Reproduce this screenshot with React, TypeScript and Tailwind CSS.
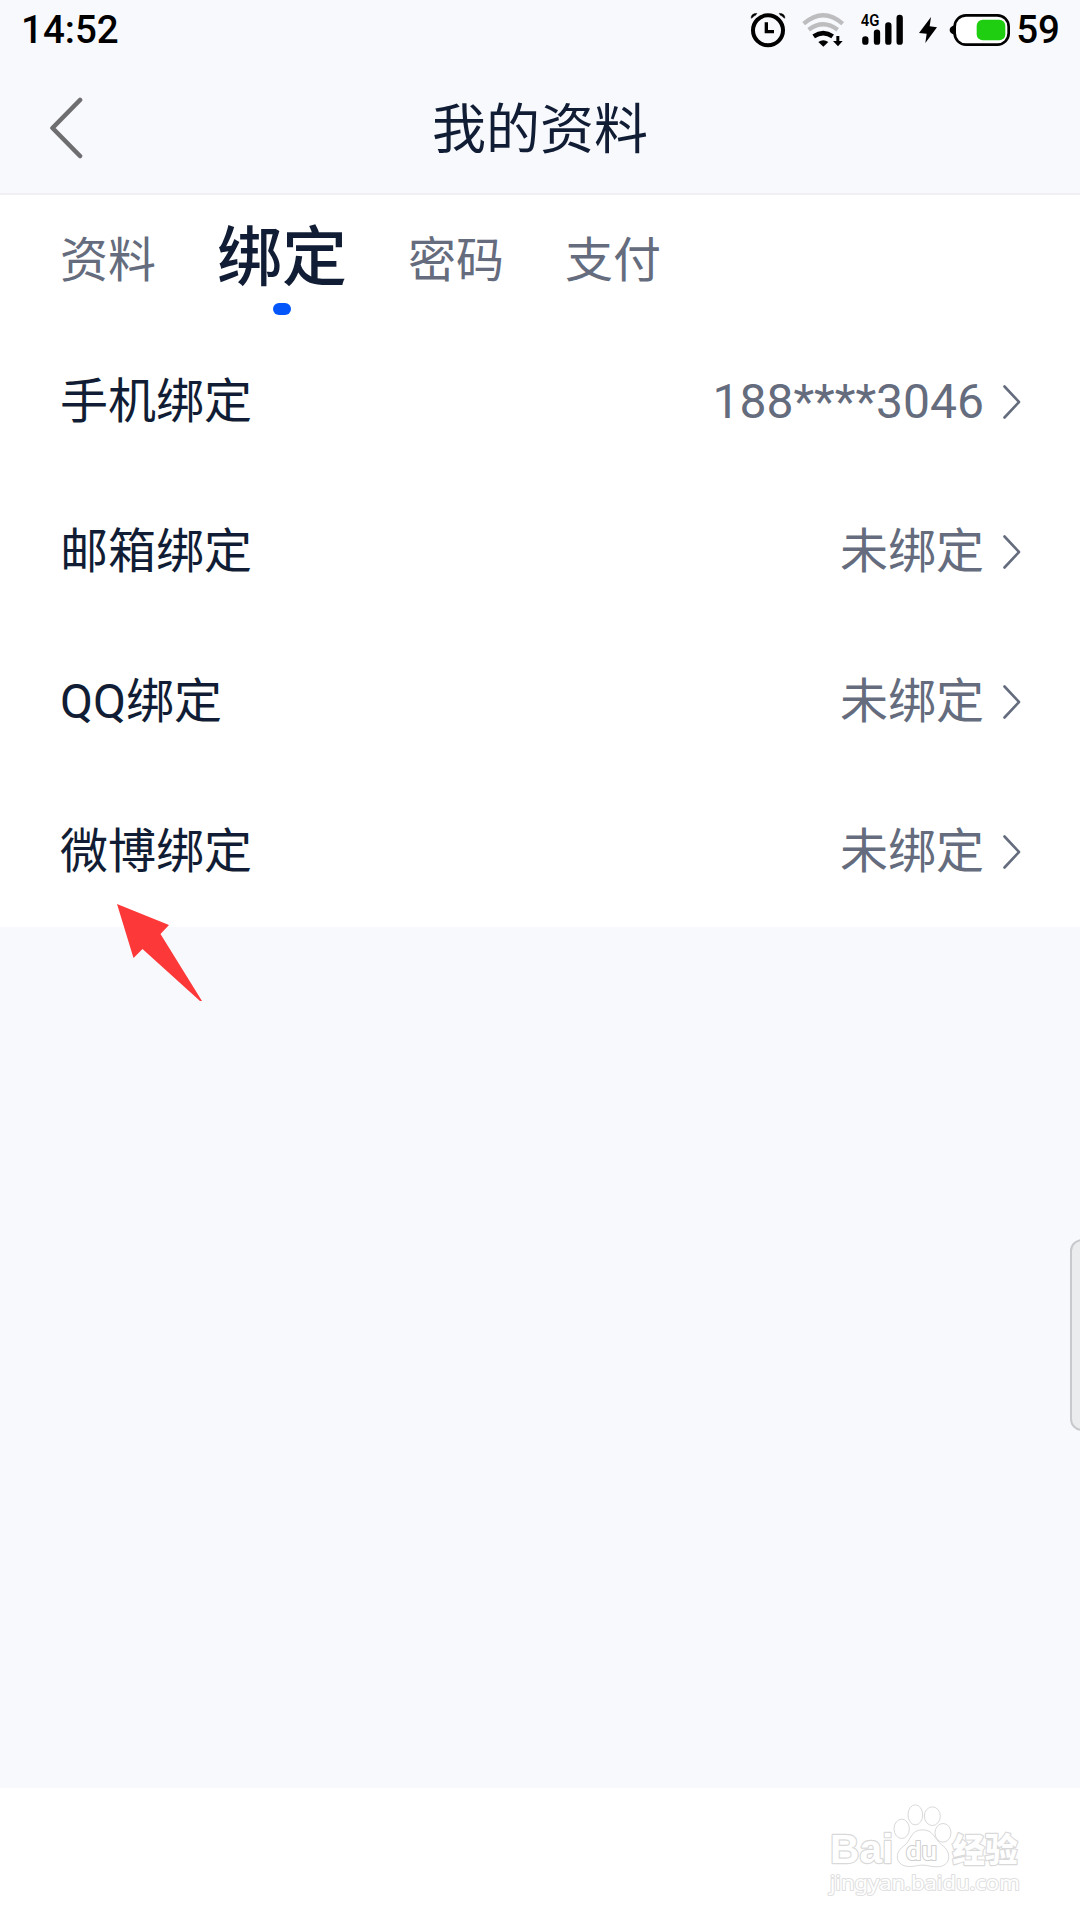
import React from 'react';

interface BindingItem {
  label: string;
  value: string;
}

const TABS = ['资料', '绑定', '密码', '支付'];
const ACTIVE_TAB = '绑定';

const BINDINGS: BindingItem[] = [
  { label: '手机绑定', value: '188****3046' },
  { label: '邮箱绑定', value: '未绑定' },
  { label: 'QQ绑定', value: '未绑定' },
  { label: '微博绑定', value: '未绑定' },
];

const AlarmIcon = () => (
  <svg viewBox="60 36 108 108" className="h-9 w-9" fill="none" stroke="#000">
    <circle cx="114" cy="91" r="45" strokeWidth="12" />
    <path d="M109 67v28h23" strokeWidth="10" />
    <path d="M63 55q0-15 18-15l-4 6q-6 1-8 6zM165 55q0-15-18-15l4 6q6 1 8 6z" fill="#000" strokeWidth="1" />
  </svg>
);

const WifiIcon = () => (
  <svg viewBox="216 36 126 108" className="h-9 w-[42px]" fill="none">
    <path d="M221 71Q280 20 338 71" stroke="#bdbdbf" strokeWidth="13" />
    <path d="M236 89Q280 56 323 89" stroke="#bdbdbf" strokeWidth="13" />
    <path d="M251 109Q280 90 308 109" stroke="#000" strokeWidth="14" />
    <path d="M265 126Q280 115 295 126L280 140Z" fill="#000" />
    <path d="M319 108h9v15h10L324 139L309 123h10z" fill="#000" />
  </svg>
);

const SignalIcon = () => (
  <svg viewBox="393 36 129 108" className="h-9 w-[43px]" fill="none" stroke="#000" strokeWidth="19" strokeLinecap="round">
    <text x="392" y="77" fontSize="49" fontWeight="600" textLength="56" lengthAdjust="spacingAndGlyphs" fill="#000" stroke="none" fontFamily="Roboto, sans-serif">
      4G
    </text>
    <path d="M406 118v7M441 98v27M475 76v49M509 54v71" />
  </svg>
);

const BoltIcon = () => (
  <svg viewBox="564 36 60 108" className="h-9 w-5">
    <path d="M603 51L567 99l23 2-4 28 35-47-22-3z" fill="#000" />
  </svg>
);

const BatteryIcon = () => (
  <svg viewBox="657 36 183 108" className="h-9 w-[61px]" fill="none">
    <rect x="674" y="46" width="162" height="88" rx="34" stroke="#000" strokeWidth="8" fill="#fff" />
    <path d="M672 76q-13 5-13 14t13 14z" fill="#000" />
    <rect x="740" y="59" width="86" height="62" rx="18" fill="#1fce10" />
  </svg>
);

const StatusBar = () => (
  <div className="flex h-[60px] items-center justify-between pr-5 pl-[21px] text-[38.5px] font-medium text-black">
    <span className="leading-[60px]">14:52</span>
    <div className="flex h-full items-center">
      <AlarmIcon />
      <div className="ml-4"><WifiIcon /></div>
      <div className="ml-[17px]"><SignalIcon /></div>
      <div className="ml-3.5"><BoltIcon /></div>
      <div className="ml-[11px]"><BatteryIcon /></div>
      <span className="ml-1.5 leading-[60px]">59</span>
    </div>
  </div>
);

const Header = () => (
  <header className="grid h-[135px] grid-cols-[1fr_auto_1fr] items-center border-b-2 border-[#f0f0f2] pl-[49px]">
    <svg viewBox="0 0 34 62" className="mt-0.5 h-[62px] w-[34px]" fill="none" stroke="#6e6e71" strokeWidth="4.6" strokeLinecap="round" strokeLinejoin="round">
      <path d="M31 3L3.5 31L31 59" />
    </svg>
    <h1 className="-ml-[49px] pt-[9px] text-[54px] leading-[80px]">我的资料</h1>
  </header>
);

const Tabs = () => (
  <nav className="flex h-[131px] items-start gap-[61px] pl-[60px]">
    {TABS.map((tab) =>
      tab === ACTIVE_TAB ? (
        <div key={tab} className="flex flex-col items-center pt-[19px]">
          <span className="text-[65px] leading-[88px] font-medium">{tab}</span>
          <span className="mt-px h-3 w-[18px] rounded-full bg-[#0456fb]" />
        </div>
      ) : (
        <span key={tab} className="pt-[30px] text-[48px] leading-[72px] text-[#646c7d]">
          {tab}
        </span>
      ),
    )}
  </nav>
);

const BindingRow: React.FC<{ item: BindingItem }> = ({ item }) => (
  <div className="flex h-[150px] items-center justify-between pt-0.5 pr-[59px] pl-[60px] text-[48px] leading-[72px]">
    <span>{item.label}</span>
    <div className="flex items-center gap-[19px] text-[#646c7d]">
      <span>{item.value}</span>
      <svg viewBox="0 0 18 34" className="h-[34px] w-[18px]" fill="none" stroke="currentColor" strokeWidth="2.6" strokeLinecap="round" strokeLinejoin="round">
        <path d="M1.5 1.5L16 17L1.5 32.5" />
      </svg>
    </div>
  </div>
);

const PointerArrow = () => (
  <svg viewBox="0 0 86 98" className="absolute top-[904px] left-[117px] h-[98px] w-[86px]">
    <path d="M0 0L52 21L43.500 30L85 97H83L25.500 45L16.500 54Z" fill="#fd3838" />
  </svg>
);

const Watermark = () => (
  <svg viewBox="0 0 600 290" className="h-[97px] w-[200px]" fill="#fff" stroke="#d9d9d9" strokeWidth="3" strokeLinejoin="round">
    <g paintOrder="stroke" strokeWidth="7">
      <text x="9" y="178" fontSize="122" fontWeight="700" textLength="190" lengthAdjust="spacingAndGlyphs" fontFamily="'Liberation Sans', sans-serif">Bai</text>
      <text x="376" y="173" fontSize="100" fontWeight="900" textLength="196" lengthAdjust="spacingAndGlyphs" fontFamily="'Noto Sans CJK SC', sans-serif">经验</text>
      <text x="8" y="257" fontSize="60" textLength="570" lengthAdjust="spacingAndGlyphs" strokeWidth="6" stroke="#e0e0e0" fontFamily="'Noto Sans', sans-serif">jingyan.baidu.com</text>
    </g>
    <ellipse cx="224" cy="74" rx="23" ry="29" />
    <ellipse cx="265" cy="32" rx="22" ry="30" />
    <ellipse cx="316" cy="36" rx="24" ry="28" />
    <ellipse cx="348" cy="86" rx="24" ry="28" />
    <path d="M286 77C250 77 254 108 230 126C200 146 205 187 248 187C267 187 270 183 287 183C304 183 310 188 330 188C372 188 376 143 344 122C320 102 320 77 286 77Z" />
    <text x="236" y="168" fontSize="80" fontWeight="500" textLength="94" lengthAdjust="spacingAndGlyphs" strokeWidth="6" paintOrder="stroke" stroke="#cfcfcf" fontFamily="Roboto, sans-serif">du</text>
  </svg>
);

export default function App() {
  return (
    <div className="relative flex h-[1920px] w-[1080px] flex-col overflow-hidden bg-[#f8f9fd] font-[Roboto,'Noto_Sans_CJK_SC',sans-serif] text-[#111d34]">
      <StatusBar />
      <Header />
      <main className="h-[732px] bg-white">
        <Tabs />
        {BINDINGS.map((item) => (
          <BindingRow key={item.label} item={item} />
        ))}
      </main>
      <div className="flex-1" />
      <footer className="flex h-[132px] items-start justify-end bg-white pt-4 pr-[53px]">
        <Watermark />
      </footer>
      <PointerArrow />
      {/* Edge handle, partly off the right side of the screen */}
      <div className="absolute top-[1239px] -right-4 h-[192px] w-[26px] rounded-[12px] border-2 border-[#c8c9cc] bg-[#ebecee]" />
    </div>
  );
}
